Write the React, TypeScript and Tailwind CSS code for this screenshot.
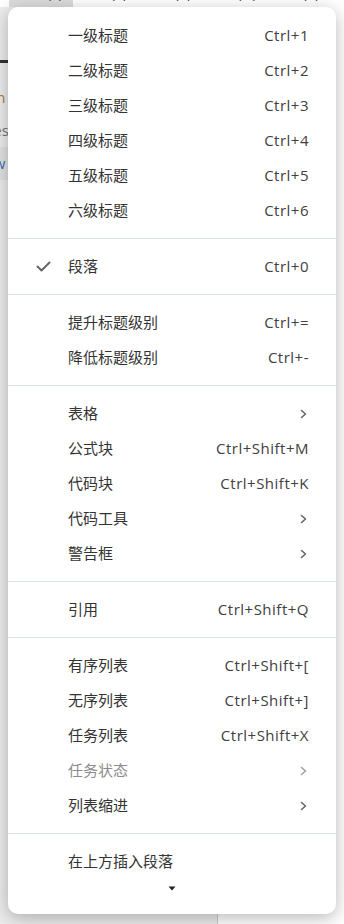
import React from 'react';

type Item =
  | { kind: 'sep' }
  | { kind: 'item'; label: string; shortcut?: string; sub?: boolean; checked?: boolean; disabled?: boolean };

const items: Item[] = [
  { kind: 'item', label: '一级标题', shortcut: 'Ctrl+1' },
  { kind: 'item', label: '二级标题', shortcut: 'Ctrl+2' },
  { kind: 'item', label: '三级标题', shortcut: 'Ctrl+3' },
  { kind: 'item', label: '四级标题', shortcut: 'Ctrl+4' },
  { kind: 'item', label: '五级标题', shortcut: 'Ctrl+5' },
  { kind: 'item', label: '六级标题', shortcut: 'Ctrl+6' },
  { kind: 'sep' },
  { kind: 'item', label: '段落', shortcut: 'Ctrl+0', checked: true },
  { kind: 'sep' },
  { kind: 'item', label: '提升标题级别', shortcut: 'Ctrl+=' },
  { kind: 'item', label: '降低标题级别', shortcut: 'Ctrl+-' },
  { kind: 'sep' },
  { kind: 'item', label: '表格', sub: true },
  { kind: 'item', label: '公式块', shortcut: 'Ctrl+Shift+M' },
  { kind: 'item', label: '代码块', shortcut: 'Ctrl+Shift+K' },
  { kind: 'item', label: '代码工具', sub: true },
  { kind: 'item', label: '警告框', sub: true },
  { kind: 'sep' },
  { kind: 'item', label: '引用', shortcut: 'Ctrl+Shift+Q' },
  { kind: 'sep' },
  { kind: 'item', label: '有序列表', shortcut: 'Ctrl+Shift+[' },
  { kind: 'item', label: '无序列表', shortcut: 'Ctrl+Shift+]' },
  { kind: 'item', label: '任务列表', shortcut: 'Ctrl+Shift+X' },
  { kind: 'item', label: '任务状态', sub: true, disabled: true },
  { kind: 'item', label: '列表缩进', sub: true },
  { kind: 'sep' },
  { kind: 'item', label: '在上方插入段落' },
];

const menuBar = ['文件(F)', '编辑(E)', '段落(P)', '格式(O)', '视图(V)', '主题(T)'];

const Chevron = ({ muted }: { muted?: boolean }) => (
  <svg width="8" height="10" viewBox="0 0 8 10" className="mr-[1px]">
    <path d="M1.5 1.5 L5.5 5 L1.5 8.5" fill="none" stroke={muted ? '#a0a0a0' : '#666'} strokeWidth="1.6" strokeLinecap="round" strokeLinejoin="round" />
  </svg>
);

const Check = () => (
  <svg width="15" height="11" viewBox="0 0 15 11">
    <path d="M1.5 5.5 L5.5 9.5 L13.5 1.5" fill="none" stroke="#666" strokeWidth="2" strokeLinecap="round" strokeLinejoin="round" />
  </svg>
);

export default function App() {
  return (
    <div
      className="relative w-[344px] h-[924px] overflow-hidden bg-white"
      style={{ fontFamily: '"Open Sans", "Noto Sans CJK SC", sans-serif' }}
    >
      {/* page behind the menu */}
      <div className="flex mt-[-20px] h-[27px] text-[14px] leading-[20px] text-[#333]">
        {menuBar.map((m, i) => (
          <div
            key={m}
            className={`w-[64px] shrink-0 flex justify-center items-end pb-[4px] ${i === 0 ? 'ml-[9px] bg-[#dcdcdc]' : ''}`}
          >
            {m}
          </div>
        ))}
      </div>
      <div className="flex h-[917px]">
        <div className="w-[218px] border-r border-[#ccc] bg-[#ececec] text-[15px]">
          <div className="h-[53px]" />
          <div className="h-[3px] w-[60px] bg-[#333]" />
          <div className="h-[18px]" />
          <div className="flex h-[33px] items-center text-[#b07a3a] -ml-[33px]">Open</div>
          <div className="flex h-[33px] items-center text-[#777] -ml-[22px]">Files</div>
          <div className="flex h-[33px] items-center text-[#3e6fb0] bg-[#e2e2e2]"><span className="-ml-[26px]">New</span></div>
        </div>
        <div className="flex-1 bg-white" />
      </div>

      {/* dropdown menu */}
      <div className="absolute left-[8px] top-[7px] w-[328px] rounded-[10px] bg-white pt-[11px] shadow-[0_4px_18px_rgba(0,0,0,0.28)] text-[15px]">
        {items.map((it, i) =>
          it.kind === 'sep' ? (
            <div key={i} className="my-[10px] h-px bg-[#dde4ee]" />
          ) : (
            <div key={i} className="flex h-[35px] items-center pl-[28px] pr-[27px]">
              <div className="w-[32px] flex items-center">{it.checked && <Check />}</div>
              <div className={`flex-1 ${it.disabled ? 'text-[#8c8c8c]' : 'text-[#333]'}`}>{it.label}</div>
              {it.shortcut && <div className="text-[#404040] tracking-[0.5px]">{it.shortcut}</div>}
              {it.sub && <Chevron muted={it.disabled} />}
            </div>
          )
        )}
        <div className="flex h-[35px] justify-center pt-[7px]">
          <svg width="8" height="5" viewBox="0 0 8 5">
            <path d="M0.5 0.5 L7.5 0.5 L4 4.5 Z" fill="#222" />
          </svg>
        </div>
      </div>
    </div>
  );
}
